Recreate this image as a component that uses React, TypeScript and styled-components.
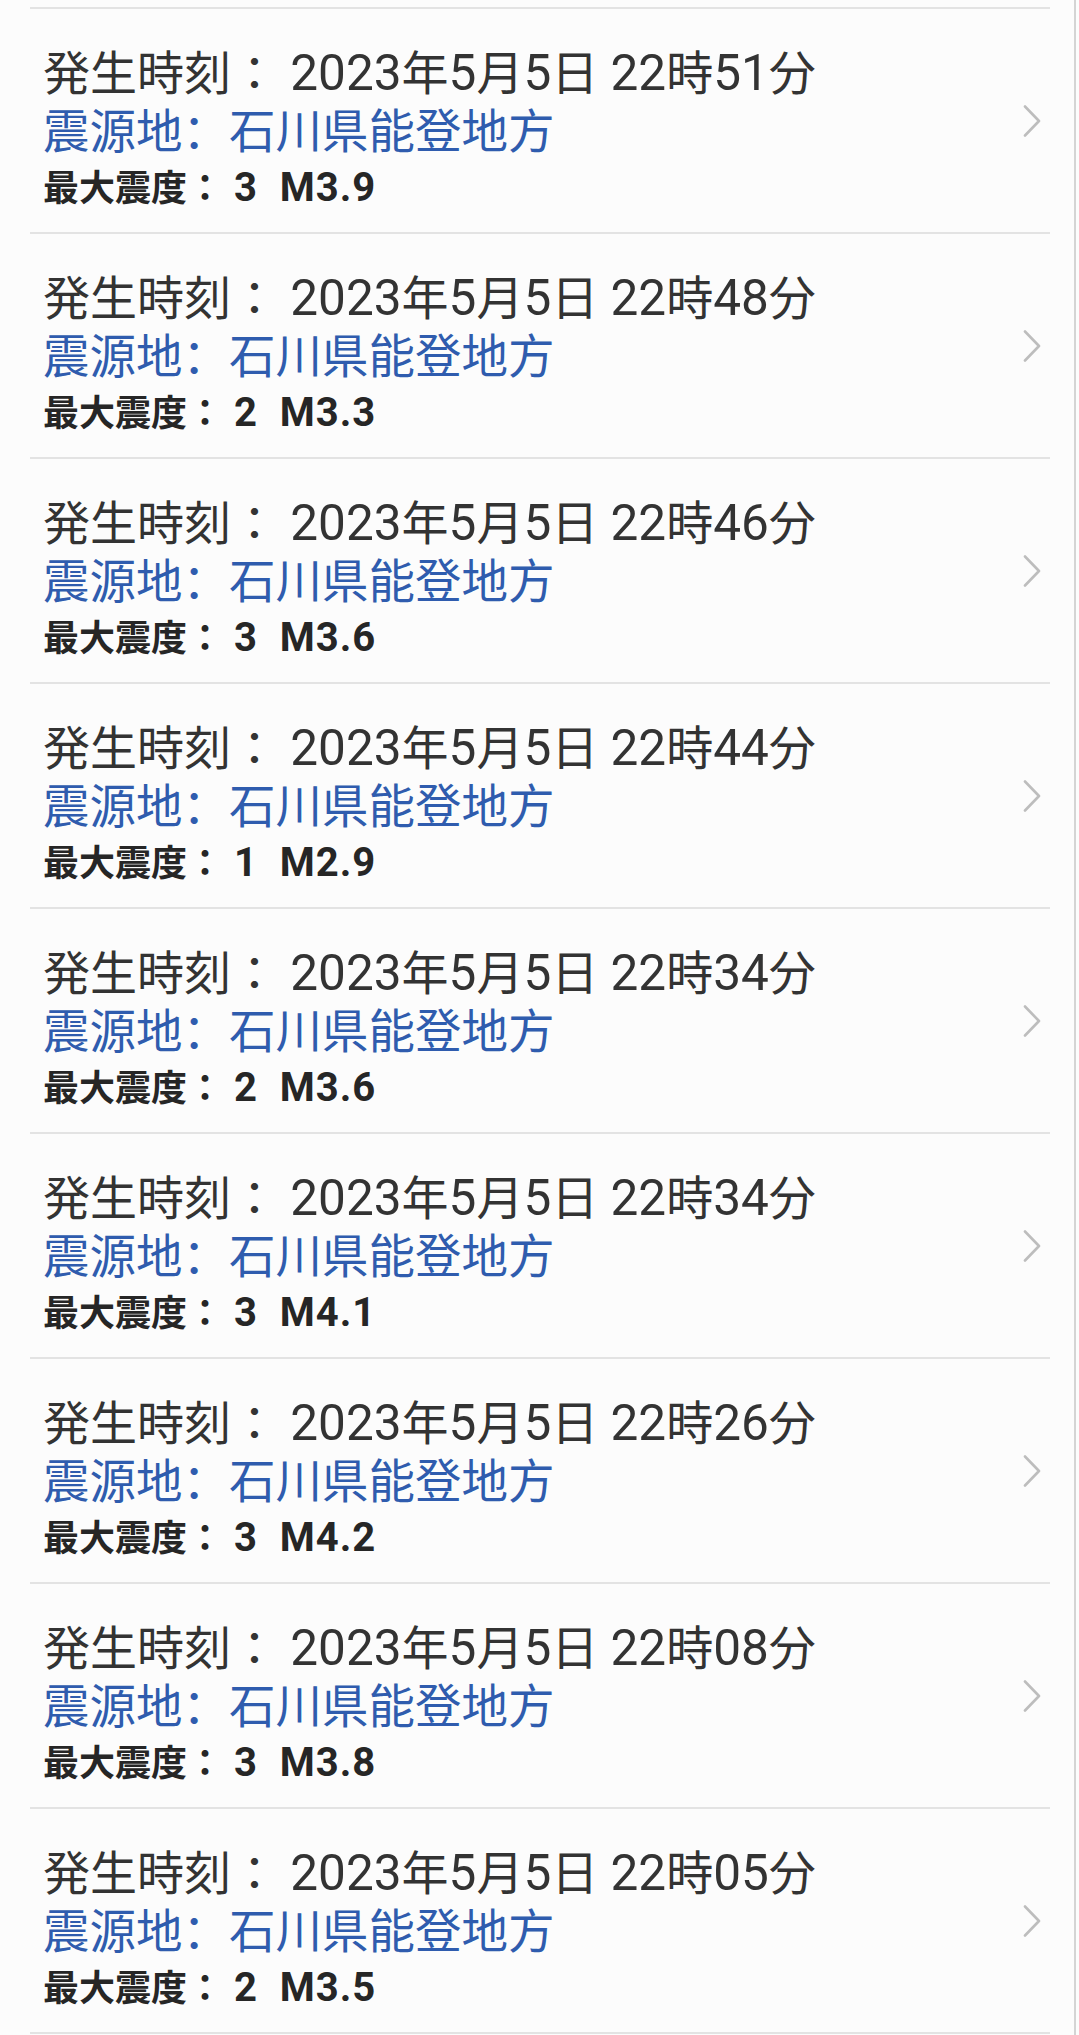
import React from "react";
import styled, { createGlobalStyle } from "styled-components";

const GlobalStyle = createGlobalStyle`
  html, body {
    margin: 0;
    padding: 0;
    background: #fcfcfc;
  }
  body {
    font-family: Roboto, "Noto Sans CJK JP", sans-serif;
    -webkit-font-smoothing: antialiased;
  }
`;

const Page = styled.div`
  width: 1079px;
  height: 2035px;
  overflow: hidden;
  box-sizing: border-box;
  background: #fcfcfc;
  display: flex;
`;

const Content = styled.div`
  flex: 1;
  padding-top: 7px;
  padding-left: 30px;
  padding-right: 24px;
`;

const Scrollbar = styled.div`
  width: 2px;
  margin-right: 3px;
  background: #d4d4d4;
`;

const List = styled.ul`
  list-style: none;
  margin: 0;
  padding: 0;
  border-top: 2px solid #e3e3e3;
`;

const Row = styled.li`
  height: 225px;
  box-sizing: border-box;
  border-bottom: 2px solid #e3e3e3;
  display: flex;
  align-items: flex-start;
  padding-left: 13px;
  padding-top: 32px;
`;

const Texts = styled.div`
  flex: 1;
  display: flex;
  flex-direction: column;
`;

const TimeLine = styled.div`
  font-family: "Noto Sans CJK JP", sans-serif;
  font-size: 47px;
  line-height: 58px;
  color: #333333;
  white-space: pre;
`;

const PlaceLine = styled.div`
  font-family: "Noto Sans CJK SC", sans-serif;
  font-size: 46.5px;
  line-height: 58px;
  color: #2f5cae;
  white-space: pre;
`;

const InfoLine = styled.div`
  font-family: "Noto Sans CJK JP", sans-serif;
  font-size: 36px;
  font-weight: 700;
  line-height: 56px;
  color: #262626;
  white-space: pre;
`;

const Latin = styled.span<{ $size: number; $spacing?: number }>`
  font-family: Roboto, "Liberation Sans", sans-serif;
  font-size: ${(p) => p.$size}px;
  letter-spacing: ${(p) => p.$spacing ?? 0}px;
  line-height: 1;
`;

const Chevron = styled.svg`
  width: 18px;
  height: 32px;
  align-self: center;
  margin-right: 9px;
  margin-top: -32px;
  flex-shrink: 0;
`;

const LATIN_RUN = /([0-9A-Za-z. ]+)/;

function withLatin(text: string, size: number, spacing = 0) {
  return text.split(LATIN_RUN).map((part, i) =>
    i % 2 === 1 ? (
      <Latin key={i} $size={size} $spacing={spacing}>
        {part}
      </Latin>
    ) : (
      part
    )
  );
}

type Quake = { time: string; intensity: string; mag: string };

const quakes: Quake[] = [
  { time: "22時51分", intensity: "3", mag: "3.9" },
  { time: "22時48分", intensity: "2", mag: "3.3" },
  { time: "22時46分", intensity: "3", mag: "3.6" },
  { time: "22時44分", intensity: "1", mag: "2.9" },
  { time: "22時34分", intensity: "2", mag: "3.6" },
  { time: "22時34分", intensity: "3", mag: "4.1" },
  { time: "22時26分", intensity: "3", mag: "4.2" },
  { time: "22時08分", intensity: "3", mag: "3.8" },
  { time: "22時05分", intensity: "2", mag: "3.5" },
  { time: "21時58分", intensity: "2", mag: "3.1" },
];

export default function App() {
  return (
    <>
      <GlobalStyle />
      <Page>
        <Content>
          <List>
            {quakes.map((q, i) => (
              <Row key={i}>
                <Texts>
                  <TimeLine>
                    {withLatin(`発生時刻： 2023年5月5日 ${q.time}`, 49.5)}
                  </TimeLine>
                  <PlaceLine>震源地：石川県能登地方</PlaceLine>
                  <InfoLine>
                    {withLatin(`最大震度： ${q.intensity}  M${q.mag}`, 40, 1)}
                  </InfoLine>
                </Texts>
                <Chevron viewBox="0 0 18 32" aria-hidden="true">
                  <polyline
                    points="2,1.5 16,16 2,30.5"
                    fill="none"
                    stroke="#bdbdbd"
                    strokeWidth="2.6"
                    strokeLinecap="round"
                    strokeLinejoin="round"
                  />
                </Chevron>
              </Row>
            ))}
          </List>
        </Content>
        <Scrollbar />
      </Page>
    </>
  );
}
